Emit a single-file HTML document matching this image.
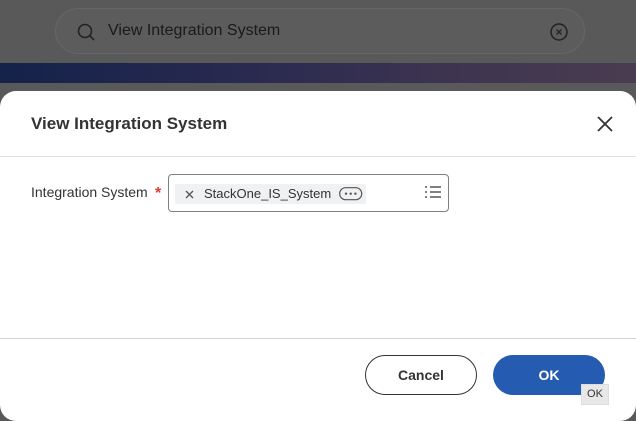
<!DOCTYPE html>
<html><head><style>
*{margin:0;padding:0;box-sizing:border-box}
body{width:636px;height:409px;overflow:hidden;background:#595959;font-family:"Liberation Sans",sans-serif;position:relative}
.pill{position:absolute;left:55px;top:8px;width:530px;height:46px;border-radius:23px;background:#5c5c5c;border:1px solid #666}
.pill .t{position:absolute;left:52px;top:13px;font-size:16px;color:#1a1a1a}
.band{position:absolute;left:0;top:63px;width:636px;height:20px;background:linear-gradient(90deg,#15224a,#2a2a50 40%,#3d3450 70%,#4a3c50)}
.modal{position:absolute;left:0;top:91px;width:636px;height:330px;background:#fff;border-radius:16px}
.title{position:absolute;left:31px;top:23px;font-size:17px;font-weight:bold;color:#333}
.hd{position:absolute;left:0;top:65px;width:636px;height:1px;background:#e0e0e0}
.fd{position:absolute;left:0;top:247px;width:636px;height:1px;background:#d4d4d4}
.lbl{position:absolute;left:31px;top:93px;font-size:14px;color:#333}
.star{position:absolute;left:155px;top:94px;font-size:16px;color:#d93c2c;font-weight:bold}
.inp{position:absolute;left:168px;top:83px;width:281px;height:38px;border:1px solid #7b8088;border-radius:4px}
.chip{position:absolute;left:6px;top:9px;width:191px;height:20px;background:#f0f1f3;border-radius:2px;font-size:13px;color:#333}
.btn{position:absolute;top:264px;height:40px;border-radius:20px;font-size:14px;font-weight:bold;text-align:center;line-height:38px}
</style></head><body>
<div class="pill">
<svg style="position:absolute;left:20px;top:13px" width="20" height="20"><circle cx="9" cy="9" r="6.5" fill="none" stroke="#222" stroke-width="1.6"/><path d="M14 14l4 4" stroke="#222" stroke-width="1.6"/></svg>
<div class="t">View Integration System</div>
<svg style="position:absolute;left:493px;top:13px" width="20" height="20"><circle cx="10" cy="10" r="8" fill="none" stroke="#222" stroke-width="1.5"/><path d="M7.5 7.5l5 5M12.5 7.5l-5 5" stroke="#222" stroke-width="1.3"/></svg>
</div>
<div class="band"></div>
<div class="modal">
<div class="title">View Integration System</div>
<svg style="position:absolute;left:596px;top:24px" width="18" height="18"><path d="M2 2l14 14M16 2L2 16" stroke="#333" stroke-width="1.8"/></svg>
<div class="hd"></div>
<div class="lbl">Integration System</div>
<div class="star">*</div>
<div class="inp">
<div class="chip">
<svg style="position:absolute;left:10px;top:6px" width="9" height="9"><path d="M1 1l7 7M8 1L1 8" stroke="#555" stroke-width="1.3"/></svg>
<span style="position:absolute;left:29px;top:2px">StackOne_IS_System</span>
<svg style="position:absolute;left:164px;top:3px" width="24" height="14"><rect x="0.7" y="0.7" width="22" height="12" rx="6" fill="none" stroke="#555" stroke-width="1.2"/><circle cx="7" cy="6.7" r="1.2" fill="#555"/><circle cx="11.7" cy="6.7" r="1.2" fill="#555"/><circle cx="16.4" cy="6.7" r="1.2" fill="#555"/></svg>
</div>
<svg style="position:absolute;left:255px;top:10px" width="18" height="16"><g stroke="#555" stroke-width="1.4"><path d="M1 2h2M6 2h11M1 7h2M6 7h11M1 12h2M6 12h11"/></g></svg>
</div>
<div class="fd"></div>
<div class="btn" style="left:365px;width:112px;border:1px solid #333;color:#333;background:#fff">Cancel</div>
<div class="btn" style="left:493px;width:112px;background:#255cb2;color:#fff;line-height:40px">OK</div>
<div style="position:absolute;left:581px;top:293px;width:28px;height:21px;background:#e8e8e8;border:1px solid #ddd;font-size:11px;color:#333;text-align:center;line-height:19px">OK</div>
</div>
</body></html>
